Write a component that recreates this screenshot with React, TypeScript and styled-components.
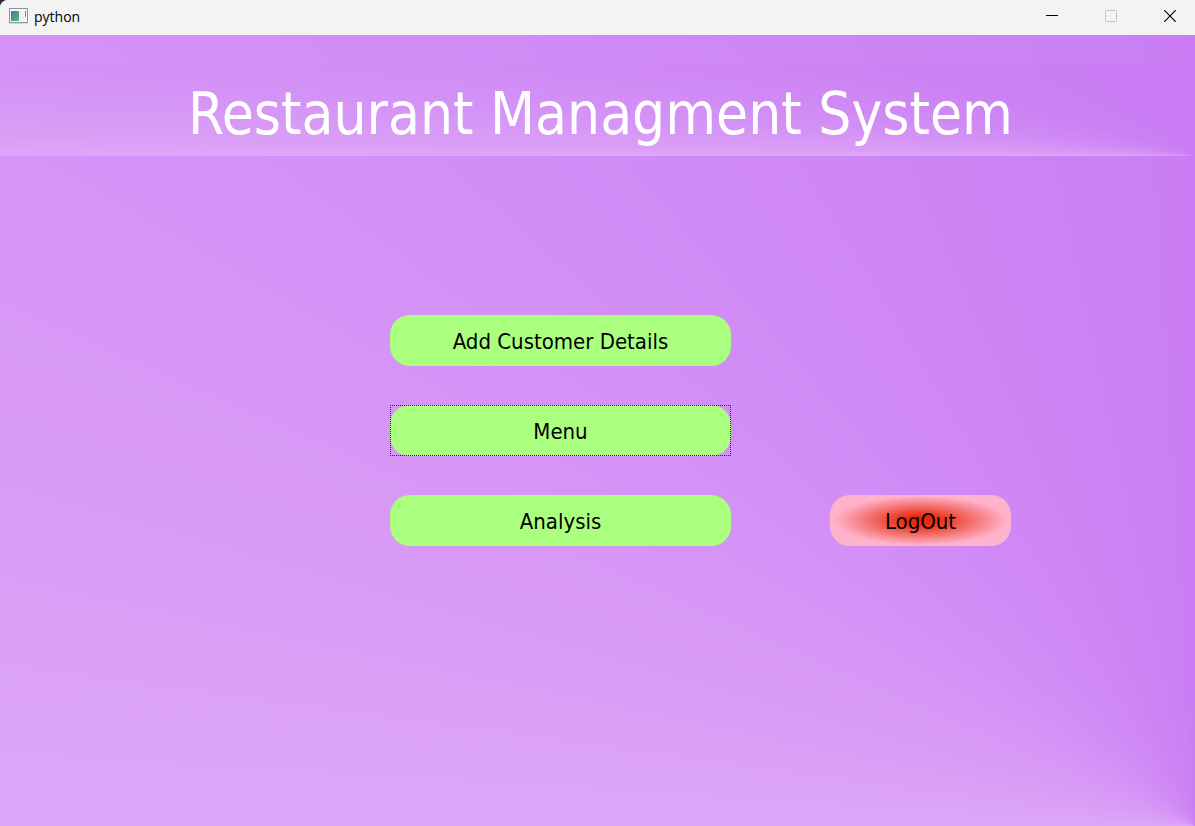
import React from "react";
import styled, { createGlobalStyle } from "styled-components";

const GlobalStyle = createGlobalStyle`
  *, *::before, *::after { box-sizing: border-box; }
  html, body, #root { height: 100%; margin: 0; }
  body { background: #2b2733; }
`;

const uiFont = `"DejaVu Sans Condensed", "Noto Sans", sans-serif`;

const Window = styled.div`
  display: flex;
  flex-direction: column;
  min-height: 100%;
  overflow: hidden;
  border-top-left-radius: 8px;
  background: #f3f3f3;
`;

const TitleBar = styled.header`
  display: flex;
  align-items: center;
  height: 35px;
  padding: 0 0 3px 9px;
  background: #f3f3f3;
`;

const AppName = styled.span`
  flex: 1;
  padding: 2px 0 0 6px;
  font: 14px/20px "Open Sans", "Noto Sans", sans-serif;
  color: #000;
`;

const Controls = styled.div`
  display: flex;
  gap: 9px;
`;

const ControlButton = styled.button`
  display: flex;
  align-items: center;
  justify-content: center;
  width: 50px;
  height: 32px;
  padding: 0;
  border: 0;
  background: transparent;
  color: #000;

  &:disabled { color: #c4c4c4; }
`;

const Screen = styled.main`
  flex: 1;
  display: flex;
  flex-direction: column;
  padding-top: 30px;
  background: conic-gradient(
    from 270deg at 100% 100%,
    #dda8f9 0deg,
    #d99ef5 12deg,
    #d696f6 26deg,
    #d18cf6 46deg,
    #cd85f3 67deg,
    #cb80f3 84deg,
    #ca7cf4 90deg
  );
`;

const Title = styled.h1`
  margin: 0;
  padding: 13px 0 6px 6px;
  font: 400 58px/72px ${uiFont};
  color: #fff;
  text-align: center;
  white-space: nowrap;
  background: conic-gradient(
    from 270deg at 100% 100%,
    #dda8f9 0deg,
    #d99ef5 1deg,
    #d392f6 4deg,
    #cf89f4 8deg,
    #cb80f3 17deg,
    #c97bf3 50deg
  );
`;

const Actions = styled.nav`
  display: grid;
  grid-template-columns: 390fr 341px 99px 181px 184fr;
  row-gap: 39px;
  padding: 159px 0 40px;
`;

const ActionButton = styled.button<{ $focused?: boolean }>`
  position: relative;
  grid-column: 2;
  height: 51px;
  padding: 2px 0 0;
  border: 0;
  border-radius: 20px;
  outline: 0;
  background: #aaff7f;
  color: #000;
  font: 22px/28px ${uiFont};

  &::after {
    content: "";
    display: ${(p) => (p.$focused ? "block" : "none")};
    position: absolute;
    inset: 0;
    border: 1px dotted #55007f;
  }
`;

const LogOutButton = styled(ActionButton)`
  grid-column: 4;
  background: radial-gradient(50% 50% at center, #e8290b 0%, #e8290b 16%, #ffb3cb 96%);
`;

const AppIcon = () => (
  <svg width="19" height="16" viewBox="0 0 19 16" aria-hidden="true">
    <defs>
      <linearGradient id="pane" x1="0" y1="0" x2="1" y2="1">
        <stop offset="0" stopColor="#3f78a8" />
        <stop offset="1" stopColor="#5fb57a" />
      </linearGradient>
    </defs>
    <rect x="0.5" y="0.5" width="18" height="14" fill="#f8f9fa" stroke="#8c949c" />
    <rect x="2" y="3" width="8" height="10" fill="url(#pane)" />
    <rect x="11" y="3" width="4" height="10" fill="#eef0f2" />
    <rect x="16" y="3" width="1" height="6" fill="url(#pane)" />
    <path d="M1 15.5H18" stroke="#d5d5d5" />
  </svg>
);

export default function App() {
  return (
    <>
      <GlobalStyle />
      <Window>
        <TitleBar>
          <AppIcon />
          <AppName>python</AppName>
          <Controls>
            <ControlButton aria-label="Minimize">
              <svg width="12" height="12" viewBox="0 0 12 12">
                <path d="M0 5.5H12" stroke="currentColor" />
              </svg>
            </ControlButton>
            <ControlButton aria-label="Maximize" disabled>
              <svg width="12" height="12" viewBox="0 0 12 12">
                <rect x="0.5" y="0.5" width="11" height="11" rx="1" fill="none" stroke="currentColor" />
              </svg>
            </ControlButton>
            <ControlButton aria-label="Close">
              <svg width="12" height="12" viewBox="0 0 12 12">
                <path d="M0.3 0.3L11.7 11.7M11.7 0.3L0.3 11.7" stroke="currentColor" strokeWidth="1.2" />
              </svg>
            </ControlButton>
          </Controls>
        </TitleBar>
        <Screen>
          <Title>Restaurant Managment System</Title>
          <Actions>
            <ActionButton>Add Customer Details</ActionButton>
            <ActionButton $focused>Menu</ActionButton>
            <ActionButton>Analysis</ActionButton>
            <LogOutButton>LogOut</LogOutButton>
          </Actions>
        </Screen>
      </Window>
    </>
  );
}
